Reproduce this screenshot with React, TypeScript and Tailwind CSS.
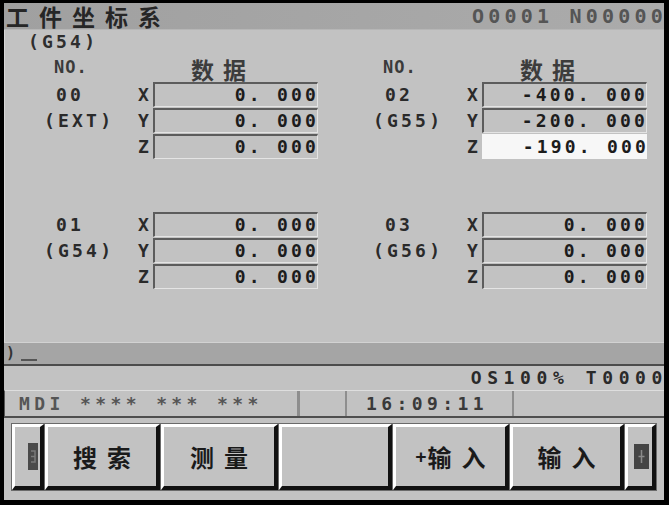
import React from "react";

const mono = "font-['DejaVu_Sans_Mono','Liberation_Mono',monospace]";
const cjk = "font-['Noto_Sans_CJK_SC','Noto_Sans',sans-serif]";

function Field({ v, sel }: { v: string; sel?: boolean }) {
  return (
    <div
      className={
        sel
          ? "w-[165px] h-[25px] flex items-center justify-end pr-[1px] bg-[#f7f7f7]"
          : "w-[165px] h-[25px] flex items-center justify-end pr-[1px] border-t-2 border-l-2 border-b border-r border-t-[#5c5c5c] border-l-[#5c5c5c] border-b-[#e4e4e4] border-r-[#e4e4e4]"
      }
    >
      <span className={`${mono} text-[18px] leading-[18px] font-bold tracking-[3.2px] mr-[-3px] text-[#1c1c1c]`}>{v}</span>
    </div>
  );
}

function Row({ label, pad, axis, v, sel }: { label: string; pad?: boolean; axis: string; v: string; sel?: boolean }) {
  return (
    <div className="flex items-center h-[25px]">
      <div
        className={`w-[94px] ${pad ? "pl-[12px]" : ""} ${mono} text-[18px] leading-[18px] font-bold tracking-[3.2px] text-[#2a2a2a] whitespace-pre`}
      >
        {label}
      </div>
      <div className={`w-[15px] ${mono} text-[18px] leading-[18px] font-bold text-[#2a2a2a]`}>{axis}</div>
      <Field v={v} sel={sel} />
    </div>
  );
}

function Block({
  num,
  g,
  vals,
  selZ,
}: {
  num: string;
  g: string;
  vals: [string, string, string];
  selZ?: boolean;
}) {
  return (
    <div className="flex flex-col gap-[1px] pl-[39px]">
      <Row label={num} pad axis="X" v={vals[0]} />
      <Row label={g} axis="Y" v={vals[1]} />
      <Row label="" axis="Z" v={vals[2]} sel={selZ} />
    </div>
  );
}

function Header() {
  return (
    <div className="flex items-start h-[24px] pl-[39px]">
      <div className={`w-[109px] pl-[10px] pt-[1px] ${mono} text-[17px] leading-[18px] font-bold tracking-[1px] text-[#3a3a3a]`}>
        NO.
      </div>
      <div className={`pl-[38px] ${cjk} text-[23px] leading-[24px] font-bold tracking-[9px] text-[#3c3c3c]`}>数据</div>
    </div>
  );
}

function Key({ w, children }: { w: string; children?: React.ReactNode }) {
  return (
    <div
      className={`${w} h-[66px] bg-[#c2c2c2] border-t-[3px] border-l-[3px] border-t-white border-l-white border-b-[4px] border-r-[4px] border-b-[#111] border-r-[#111] outline outline-1 outline-[#6a6a6a] flex items-center justify-center`}
    >
      {children}
    </div>
  );
}

const keyText = `${cjk} text-[24px] leading-[26px] font-bold tracking-[10px] mr-[-10px] text-[#1a1a1a] flex items-center`;

export default function App() {
  return (
    <div className="w-[669px] h-[505px] bg-black pt-[3px] pl-[4px] pr-[5px] pb-[5px] flex">
      <div className="w-[660px] h-[497px] flex flex-col bg-[#c2c2c2]">
        {/* title bar */}
        <div className="h-[27px] bg-linear-to-r from-[#a0a0a0] to-[#ababab] flex items-center justify-between border-b border-[#b6b6b6]">
          <div className={`pl-[2px] ${cjk} text-[23px] leading-[24px] font-bold tracking-[10px] text-[#262626]`}>工件坐标系</div>
          <div className={`${mono} text-[20px] leading-[20px] font-bold tracking-[4.2px] mr-[-3px] text-[#555]`}>O0001 N00000</div>
        </div>

        {/* body */}
        <div className="h-[312px] border-l border-[#d6d6d6] flex flex-col">
          <div className={`mt-[3px] h-[18px] pl-[23px] ${mono} text-[18px] leading-[18px] font-bold tracking-[3.2px] text-[#2e2e2e]`}>
            (G54)
          </div>
          <div className="mt-[6px] flex">
            <div className="w-[329px] flex flex-col">
              <Header />
              <div className="mt-[1px]">
                <Block num="00" g="(EXT)" vals={["0. 000", "0. 000", "0. 000"]} />
              </div>
              <div className="mt-[53px]">
                <Block num="01" g="(G54)" vals={["0. 000", "0. 000", "0. 000"]} />
              </div>
            </div>
            <div className="w-[330px] flex flex-col">
              <Header />
              <div className="mt-[1px]">
                <Block num="02" g="(G55)" vals={["-400. 000", "-200. 000", "-190. 000"]} selZ />
              </div>
              <div className="mt-[53px]">
                <Block num="03" g="(G56)" vals={["0. 000", "0. 000", "0. 000"]} />
              </div>
            </div>
          </div>
        </div>

        {/* input line */}
        <div className="h-[24px] bg-[#a5a5a5] border-t border-[#d2d2d2] border-b-2 border-b-[#4c4c4c] flex items-start pl-[2px]">
          <span className={`${mono} text-[15px] leading-[18px] font-bold text-[#333] mt-[1px]`}>)</span>
          <div className="w-[16px] h-[2px] bg-[#555] mt-[16px] ml-[6px]" />
        </div>

        {/* status */}
        <div className="h-[24px] flex items-center justify-end">
          <span className={`${mono} text-[18px] leading-[18px] font-bold tracking-[5.6px] mr-[-4px] text-[#2a2a2a]`}>OS100% T0000</span>
        </div>

        {/* MDI bar */}
        <div className="h-[28px] flex border-t border-[#dedede] border-b-2 border-b-[#4e4e4e] border-l border-l-[#555]">
          <div className="w-[295px] flex items-center pl-[14px] border-r-[3px] border-[#8e8e8e]">
            <span className={`${mono} text-[18px] leading-[18px] font-bold tracking-[4.4px] text-[#555] whitespace-pre`}>MDI **** *** ***</span>
          </div>
          <div className="w-[47px] border-r-[2px] border-[#8e8e8e]" />
          <div className="w-[167px] flex items-center pl-[19px] border-r-[2px] border-[#8e8e8e]">
            <span className={`${mono} text-[18px] leading-[18px] font-bold tracking-[4.4px] text-[#3a3a3a]`}>16:09:11</span>
          </div>
          <div className="flex-1" />
        </div>

        {/* soft keys */}
        <div className="flex-1 flex items-start gap-[1px] pt-[6px] pl-[8px]">
          <Key w="w-[32px]">
            <svg width="10" height="27" viewBox="0 0 10 27" className="ml-[10px]">
              <rect x="0" y="0" width="10" height="27" fill="#4a4a4a" />
              <path d="M3 8 L7 8 L7 19 L3 19 M3 13.5 L7 13.5" stroke="#7a7a7a" strokeWidth="1.5" fill="none" />
            </svg>
          </Key>
          <Key w="w-[115px]">
            <span className={keyText}>搜索</span>
          </Key>
          <Key w="w-[117px]">
            <span className={keyText}>测量</span>
          </Key>
          <Key w="w-[113px]" />
          <Key w="w-[116px]">
            <span className={keyText}>
              <span className={`${mono} text-[18px] leading-[18px] tracking-[0px] mr-[1px]`}>+</span>输入
            </span>
          </Key>
          <Key w="w-[114px]">
            <span className={keyText}>输入</span>
          </Key>
          <Key w="w-[31px]">
            <svg width="15" height="25" viewBox="0 0 15 25" className="ml-[2px]">
              <rect x="0" y="0" width="15" height="25" fill="#444" />
              <path d="M7.5 6 L7.5 19 M4.5 12.5 L10.5 12.5" stroke="#8a8a8a" strokeWidth="1.5" fill="none" />
            </svg>
          </Key>
        </div>
      </div>
    </div>
  );
}
